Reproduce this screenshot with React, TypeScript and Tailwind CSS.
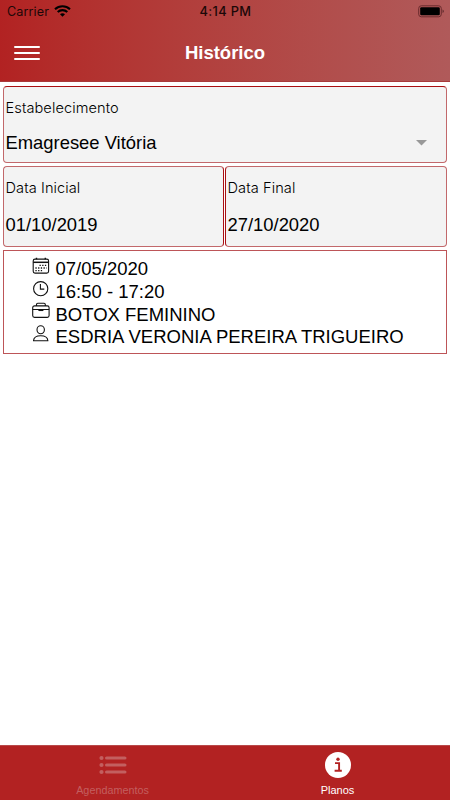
import type { ReactNode } from 'react'

interface FieldProps {
  label: string
  value: string
  className?: string
  valueClass?: string
  children?: ReactNode
}

function Field({ label, value, className = '', valueClass = '', children }: FieldProps) {
  return (
    <div className={`relative rounded-[4px] border border-[#c2686b] bg-[#f3f3f3] pl-[1.5px] text-black ${className}`}>
      <div className="font-['Inter'] text-[14.6px] font-light leading-5 tracking-[0.08px] text-black">{label}</div>
      <div className={`text-[18.4px] leading-6 ${valueClass}`}>{value}</div>
      {children}
    </div>
  )
}

function CalendarIcon() {
  return (
    <svg width="18" height="18" viewBox="0 0 18 18" fill="none" stroke="#111" strokeWidth="1.1">
      <rect x="1.2" y="2.1" width="15.4" height="14" rx="1.8" />
      <path d="M1.2 5.3h15.4" strokeWidth="1.5" />
      <path d="M4.5 0.7v1.5M13.3 0.7v1.5" strokeWidth="1.4" />
      <path d="M7.5 8.3h7.2M3.4 11h11.3M3.4 13.7h7.2" strokeWidth="1.3" strokeDasharray="1.3 1.4" />
    </svg>
  )
}

function ClockIcon() {
  return (
    <svg width="18" height="18" viewBox="0 0 18 18" fill="none" stroke="#111" strokeWidth="1.1">
      <circle cx="8.7" cy="8.7" r="7.1" />
      <path d="M8.4 3.9v5.2h3.9" />
    </svg>
  )
}

function BriefcaseIcon() {
  return (
    <svg width="18" height="18" viewBox="0 0 18 18" fill="none" stroke="#111" strokeWidth="1.1">
      <rect x="0.7" y="3.9" width="16.4" height="11.5" rx="1.8" />
      <path d="M4.5 3.9V2.5q0-1.3 1.3-1.3h6.2q1.3 0 1.3 1.3v1.4M0.7 7.5h16.4" />
      <path d="M6.4 8.3h5" strokeWidth="1.5" />
    </svg>
  )
}

function PersonIcon() {
  return (
    <svg width="18" height="18" viewBox="0 0 18 18" fill="none" stroke="#111" strokeWidth="1.1">
      <ellipse cx="8.7" cy="4.7" rx="3.7" ry="4" />
      <path d="M1.5 15.8c.3-3.6 3.4-5 7.2-5s6.9 1.4 7.2 5z" strokeLinejoin="round" />
    </svg>
  )
}

function StatusBar() {
  return (
    <div className="grid h-[23px] grid-cols-3 items-center pl-[7px] pr-[6px] font-['Inter'] text-[#1c0808]">
      <div className="flex items-center gap-[5px]">
        <span className="mt-px text-[12.6px] tracking-[0.1px]">Carrier</span>
        <svg className="-mt-px" width="17" height="12" viewBox="0 0 17 12" fill="none" stroke="#000" strokeWidth="2.1">
          <path d="M1 4.2c4.2-4 10.8-4 15 0M3.7 7c2.7-2.5 6.9-2.5 9.6 0" />
          <path d="M8.5 11.7L6 9.2c1.4-1.3 3.6-1.3 5 0z" fill="#000" stroke="none" />
        </svg>
      </div>
      <div className="text-center text-[12.8px] font-medium tracking-[0.35px]">4:14 PM</div>
      <svg className="-mt-px justify-self-end" width="26" height="13" viewBox="0 0 26 13">
        <rect x="0.7" y="0.8" width="22.6" height="11" rx="2.6" fill="none" stroke="#6b2b2d" />
        <rect x="2.2" y="2.3" width="19.6" height="8" rx="1.2" />
        <path d="M24.7 4.5c1.2.6 1.2 3 0 3.6z" fill="#3a1617" />
      </svg>
    </div>
  )
}

const details = [
  { icon: <CalendarIcon />, text: '07/05/2020' },
  { icon: <ClockIcon />, text: '16:50 - 17:20' },
  { icon: <BriefcaseIcon />, text: 'BOTOX FEMININO' },
  { icon: <PersonIcon />, text: 'ESDRIA VERONIA PEREIRA TRIGUEIRO' },
]

export default function App() {
  return (
    <div className="flex h-[800px] w-[450px] flex-col overflow-hidden bg-white font-['Liberation_Sans',sans-serif]">
      <header className="h-[82px] shrink-0 border-b border-[#a83a3c] bg-linear-to-r from-[#b22222] to-[#b05a5a]">
        <StatusBar />
        <div className="grid h-[59px] grid-cols-[1fr_auto_1fr] items-center px-[14px]">
          <button className="flex w-[26px] flex-col gap-[4px]" aria-label="Menu">
            <span className="h-[2px] w-full rounded-full bg-white" />
            <span className="h-[2px] w-full rounded-full bg-white" />
            <span className="h-[2px] w-full rounded-full bg-white" />
          </button>
          <h1 className="text-[18.5px] font-bold text-white">Histórico</h1>
        </div>
      </header>

      <main className="flex grow flex-col px-[3px] pt-[4px]">
        <Field
          label="Estabelecimento"
          value="Emagresee Vitória"
          className="h-[77px] border-t-[#a90f12] pt-[11px]"
          valueClass="mt-[13px]"
        >
          <svg className="absolute right-[19px] top-[53px]" width="11" height="6" viewBox="0 0 11 6">
            <path d="M0 0h11L5.5 5.5z" fill="#989898" />
          </svg>
        </Field>
        <div className="mt-[3px] flex gap-px">
          <Field
            label="Data Inicial"
            value="01/10/2019"
            className="h-[81px] w-[221px] border-r-[#a90f12] pt-[11px]"
            valueClass="mt-[15px]"
          />
          <Field
            label="Data Final"
            value="27/10/2020"
            className="h-[81px] grow border-l-[#a90f12] pt-[11px]"
            valueClass="mt-[15px]"
          />
        </div>
        <ul className="mt-[3px] h-[104px] border border-[#bd5558] pl-[28px] pt-[7px] text-black">
          {details.map((d) => (
            <li key={d.text} className="flex h-[22.75px] items-center gap-[5.5px] text-[18.5px]">
              <span className="-mt-[7px]">{d.icon}</span>
              <span className="-mt-px whitespace-nowrap">{d.text}</span>
            </li>
          ))}
        </ul>
      </main>

      <nav className="grid h-[55px] shrink-0 grid-cols-2 border-t border-[#b8494a] bg-[#b22222]">
        <div className="flex flex-col items-center text-[#c35f5f]">
          <svg className="mt-[9px]" width="28" height="20" viewBox="0 0 28 20" fill="currentColor">
            <circle cx="2.5" cy="3" r="2.1" />
            <circle cx="2.5" cy="10" r="2.1" />
            <circle cx="2.5" cy="17" r="2.1" />
            <rect x="6" y="1.4" width="21.5" height="3.2" rx="1.6" />
            <rect x="6" y="8.4" width="21.5" height="3.2" rx="1.6" />
            <rect x="6" y="15.4" width="21.5" height="3.2" rx="1.6" />
          </svg>
          <span className="mt-[9px] text-[10.8px] leading-[13px]">Agendamentos</span>
        </div>
        <div className="flex flex-col items-center text-white">
          <svg className="mt-[6px]" width="26" height="26" viewBox="0 0 26 26">
            <circle cx="13" cy="13" r="13" fill="#fff" />
            <circle cx="13" cy="7.3" r="1.7" fill="#b22222" />
            <path d="M10 11.1h4.1v7.7M9.6 18.8h7.2" fill="none" stroke="#b22222" strokeWidth="1.9" />
          </svg>
          <span className="mt-[6px] text-[11px] leading-[13px]">Planos</span>
        </div>
      </nav>
    </div>
  )
}
